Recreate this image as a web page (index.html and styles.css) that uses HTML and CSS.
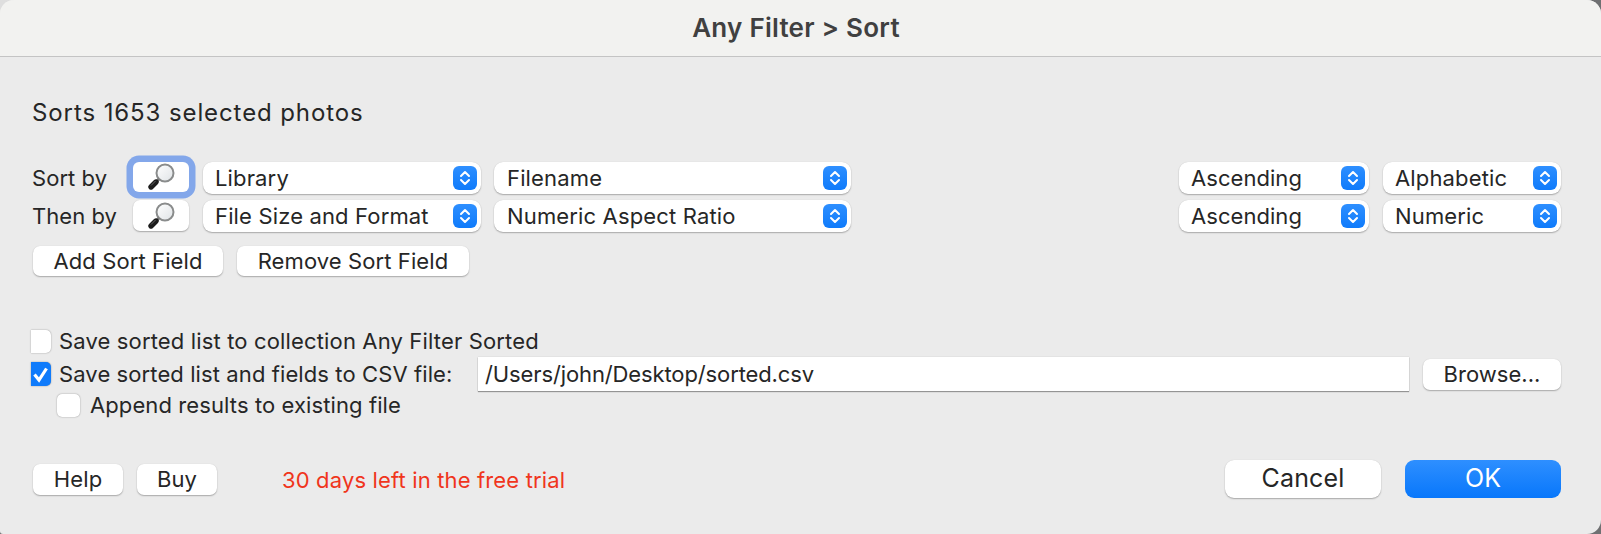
FILE: index.html
```html
<!DOCTYPE html>
<html lang="en">
<head>
<meta charset="utf-8">
<title>Any Filter &gt; Sort</title>
<link rel="stylesheet" href="styles.css">
</head>
<body>
<svg class="defs" width="0" height="0" aria-hidden="true">
  <defs>
    <linearGradient id="lens" x1="0" y1="0" x2="1" y2="1">
      <stop offset="0" stop-color="#ffffff"/>
      <stop offset="1" stop-color="#dfe3e6"/>
    </linearGradient>
  </defs>
  <symbol id="mag" viewBox="0 0 32 32">
    <circle cx="20" cy="12" r="8.5" fill="url(#lens)" stroke="#8a8c8c" stroke-width="2"/>
    <path d="M14 18 L12 20" stroke="#777" stroke-width="3"/>
    <path d="M11 21 L6 26" stroke="#1c1c1c" stroke-width="5.4" stroke-linecap="round"/>
    <path d="M10.5 20 L6 24.5" stroke="#666" stroke-width="1"/>
  </symbol>
  <symbol id="step" viewBox="0 0 24 24">
    <path d="M8 10 L12 6 L16 10 M8 14 L12 18 L16 14" fill="none" stroke="#fff" stroke-width="2" stroke-linecap="round" stroke-linejoin="round"/>
  </symbol>
</svg>
<main class="dialog">
  <header class="titlebar">Any Filter &gt; Sort</header>
  <section class="content">
    <p class="heading">Sorts 1653 selected photos</p>

    <div class="sort-row">
      <span class="sort-label">Sort by</span>
      <button class="ctl search focused"><svg class="mag"><use href="#mag"/></svg></button>
      <div class="ctl select w-field">Library<span class="stepper"><svg><use href="#step"/></svg></span></div>
      <div class="ctl select w-name">Filename<span class="stepper"><svg><use href="#step"/></svg></span></div>
      <div class="ctl select w-order push">Ascending<span class="stepper"><svg><use href="#step"/></svg></span></div>
      <div class="ctl select w-kind">Alphabetic<span class="stepper"><svg><use href="#step"/></svg></span></div>
    </div>
    <div class="sort-row second">
      <span class="sort-label">Then by</span>
      <button class="ctl search"><svg class="mag"><use href="#mag"/></svg></button>
      <div class="ctl select w-field">File Size and Format<span class="stepper"><svg><use href="#step"/></svg></span></div>
      <div class="ctl select w-name">Numeric Aspect Ratio<span class="stepper"><svg><use href="#step"/></svg></span></div>
      <div class="ctl select w-order push">Ascending<span class="stepper"><svg><use href="#step"/></svg></span></div>
      <div class="ctl select w-kind">Numeric<span class="stepper"><svg><use href="#step"/></svg></span></div>
    </div>

    <div class="field-buttons">
      <button class="ctl btn add">Add Sort Field</button>
      <button class="ctl btn remove">Remove Sort Field</button>
    </div>

    <div class="check-row first">
      <span class="check clipped"></span>
      <span>Save sorted list to collection Any Filter Sorted</span>
    </div>
    <div class="check-row csv">
      <span class="check clipped on"><svg viewBox="0 0 20 24"><path d="M3.5 12.5 L8 18 L15.5 6.5" fill="none" stroke="#fff" stroke-width="3.2"/></svg></span>
      <span class="csv-label">Save sorted list and fields to CSV file:</span>
      <input class="path" type="text" value="/Users/john/Desktop/sorted.csv">
      <button class="ctl btn browse">Browse...</button>
    </div>
    <div class="check-row nested">
      <span class="check"></span>
      <span>Append results to existing file</span>
    </div>

    <footer class="footer">
      <button class="ctl btn help">Help</button>
      <button class="ctl btn buy">Buy</button>
      <span class="trial">30 days left in the free trial</span>
      <button class="ctl big cancel">Cancel</button>
      <button class="ctl big ok">OK</button>
    </footer>
  </section>
</main>
</body>
</html>
```
FILE: styles.css
```css
* { box-sizing: border-box; }
html, body { margin: 0; height: 100%; }
body {
  background: linear-gradient(#dedede, #dedede) left top / 50% 50% no-repeat, #6f7072;
}
.defs { position: absolute; }
.dialog {
  width: 1601px;
  height: 534px;
  background: #ebebeb;
  border-radius: 14px 14px 14px 3px;
  overflow: hidden;
  color: #262626;
  font: 22px/1.2 Inter, "Liberation Sans", sans-serif;
  letter-spacing: .15px;
}
.titlebar {
  height: 57px;
  background: #f2f2f0;
  border-bottom: 1px solid #c4c4c4;
  display: flex;
  align-items: center;
  justify-content: center;
  padding-right: 9px;
  font-size: 26px;
  font-weight: 600;
  letter-spacing: .25px;
  color: #404040;
}
.content { padding: 41px 40px 0 32px; }
.heading { margin: 0 0 34px; height: 30px; line-height: 30px; font-size: 24px; letter-spacing: .9px; }
.ctl {
  background: #fff;
  border: 0;
  border-radius: 7px;
  box-shadow: 0 1px 1.5px rgba(0,0,0,.28), 0 0 1px rgba(0,0,0,.12);
  color: inherit;
  font: inherit;
  letter-spacing: inherit;
  padding: 0;
}
.sort-row { display: flex; align-items: flex-start; height: 32px; }
.sort-row.second { margin-top: 6px; }
.sort-label { width: 101px; line-height: 32px; letter-spacing: .05px; }
.search { width: 56px; height: 30px; margin-right: 14px; display: flex; align-items: center; justify-content: center; }
.second .search { height: 31px; }
.focused { box-shadow: 0 0 0 6.5px #83a7ea; border-radius: 6px; }
.mag { width: 32px; height: 32px; flex: none; }
.select {
  height: 32px;
  padding: 0 4px 0 12px;
  display: flex;
  align-items: center;
  justify-content: space-between;
  border-radius: 9px;
  margin-right: 13px;
  line-height: 34px;
}
.stepper {
  width: 24px;
  height: 24px;
  border-radius: 6px;
  background: linear-gradient(#2e8fff, #0f7bfb);
  display: block;
}
.stepper svg { width: 24px; height: 24px; display: block; }
.w-field { width: 278px; }
.w-name { width: 357px; padding-left: 13px; }
.w-order { width: 190px; margin-right: 14px; letter-spacing: .05px; }
.w-kind { width: 178px; margin-right: 0; }
.push { margin-left: auto; }
.field-buttons { display: flex; margin-top: 14px; margin-left: 1px; gap: 14px; }
.btn { height: 30px; text-align: center; }
.add { width: 190px; padding-top: 1px; letter-spacing: .1px; }
.remove { width: 232px; padding-top: 1px; letter-spacing: .1px; }
.check-row { display: flex; align-items: center; }
.check-row.first { margin-top: 53px; height: 24px; }
.check-row.csv { margin-top: 4px; height: 34px; }
.check-row.nested { margin-top: 2px; height: 24px; padding-left: 25px; letter-spacing: .1px; }
.check {
  width: 23px;
  height: 23px;
  background: #fff;
  border-radius: 5px;
  box-shadow: 0 0 1.5px rgba(0,0,0,.45);
  margin-right: 10px;
  flex: none;
}
.check.clipped {
  width: 20px;
  margin-left: -1px;
  border-radius: 0 5px 5px 0;
  margin-right: 8px;
}
.check.on { background: #0f7bfb; height: 24px; }
.check.on svg { display: block; width: 20px; height: 24px; }
.csv-label { width: 419px; flex: none; letter-spacing: .1px; }
.path {
  width: 931px;
  height: 34px;
  flex: none;
  border: 0;
  background: #fff;
  box-shadow: 0 1px 1px rgba(0,0,0,.35), 0 0 1px rgba(0,0,0,.2);
  color: inherit;
  font: inherit;
  letter-spacing: -.12px;
  padding: 0 7px;
  outline: 0;
  margin-right: 14px;
}
.browse { width: 138px; height: 31px; flex: none; letter-spacing: .05px; }
.footer { display: flex; align-items: center; height: 38px; margin-top: 43px; margin-left: 1px; }
.help { width: 90px; height: 31px; margin-right: 14px; }
.buy { width: 80px; height: 31px; margin-right: 65px; }
.trial { color: #f0351c; flex: 1; padding-top: 2px; }
.big { width: 156px; height: 38px; font-size: 25px; border-radius: 9px; padding-bottom: 2px; }
.cancel { margin-right: 24px; }
.ok { background: linear-gradient(#2e8fff, #0877fb); color: #fff; box-shadow: none; }
```
